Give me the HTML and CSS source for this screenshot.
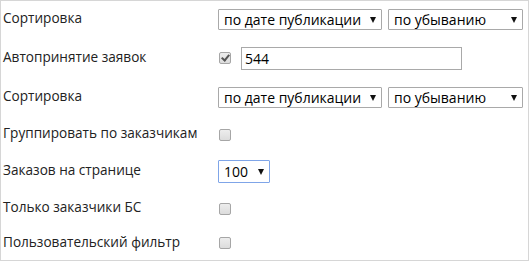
FILE: index.html
```html
<!DOCTYPE html>
<html lang="ru">
<head>
    <meta charset="UTF-8">
    <title>Настройки</title>
    <link rel="stylesheet" href="styles.css">
</head>
<body>

<div class="settings">
    <div class="row r1">
        <div class="label">Сортировка</div>
        <div class="field">
            <span class="sel w164"><select><option>по дате публикации</option></select></span>
            <span class="sel w135"><select><option>по убыванию</option></select></span>
        </div>
    </div>
    <div class="row r2">
        <div class="label">Автопринятие заявок</div>
        <div class="field">
            <span class="check checked"></span>
            <input class="text" type="text" value="544">
        </div>
    </div>
    <div class="row r3">
        <div class="label">Сортировка</div>
        <div class="field">
            <span class="sel w164"><select><option>по дате публикации</option></select></span>
            <span class="sel w135"><select><option>по убыванию</option></select></span>
        </div>
    </div>
    <div class="row r4">
        <div class="label">Группировать по заказчикам</div>
        <div class="field"><span class="check"></span></div>
    </div>
    <div class="row r5">
        <div class="label">Заказов на странице</div>
        <div class="field">
            <span class="sel w52 focus"><select><option>100</option></select></span>
        </div>
    </div>
    <div class="row r6">
        <div class="label">Только заказчики БС</div>
        <div class="field"><span class="check"></span></div>
    </div>
    <div class="row r7">
        <div class="label">Пользовательский фильтр</div>
        <div class="field"><span class="check"></span></div>
    </div>
</div>

</body>
</html>
```

FILE: styles.css
```css
body {
    margin: 0;
    font-family: "Open Sans", sans-serif;
    font-size: 13.6px;
    color: #222222;
    background: #ffffff;
}
.settings {
    width: 527px;
    height: 259px;
    border: 1px solid #d6d6d6;
}
.row {
    display: flex;
    align-items: center;
}
.r1 { height: 37px; }
.r2 { height: 40px; }
.r3 { height: 39px; }
.r4 { height: 35px; }
.r5 { height: 39px; }
.r6 { height: 35px; }
.r7 { height: 34px; }
.label {
    width: 215px;
    padding-left: 2px;
    padding-bottom: 4px;
}
.field {
    display: flex;
    align-items: center;
    gap: 6px;
}
.sel {
    position: relative;
    display: inline-block;
}
.sel select {
    appearance: none;
    -webkit-appearance: none;
    width: 100%;
    height: 21px;
    border: 1px solid #a9a9a9;
    border-radius: 1px;
    background: #ffffff;
    font-family: inherit;
    font-size: 14px;
    color: #000000;
    padding: 0 0 0 5px;
}
.sel::after {
    content: "";
    position: absolute;
    right: 6px;
    top: 8px;
    border-left: 3px solid transparent;
    border-right: 3px solid transparent;
    border-top: 6px solid #111111;
    pointer-events: none;
}
.w164 { width: 164px; }
.w135 { width: 135px; }
.w52 { width: 52px; }
.focus select {
    height: 23px;
    border-color: #7fa5e8;
}
.focus::after {
    top: 9px;
}
.check {
    display: inline-block;
    box-sizing: border-box;
    width: 12px;
    height: 12px;
    margin-left: 1px;
    border: 1px solid #a6a6a6;
    border-radius: 2px;
    background: linear-gradient(#ededed, #dcdcdc);
    position: relative;
}
.checked::after {
    content: "";
    position: absolute;
    left: 3px;
    top: 0px;
    width: 3px;
    height: 6px;
    border-right: 2px solid #555555;
    border-bottom: 2px solid #555555;
    transform: rotate(40deg);
}
.text {
    box-sizing: border-box;
    width: 221px;
    height: 23px;
    margin-left: 4px;
    border: 1px solid #a9a9a9;
    padding: 0 3px;
    font-family: inherit;
    font-size: 14px;
    color: #000000;
}
```
